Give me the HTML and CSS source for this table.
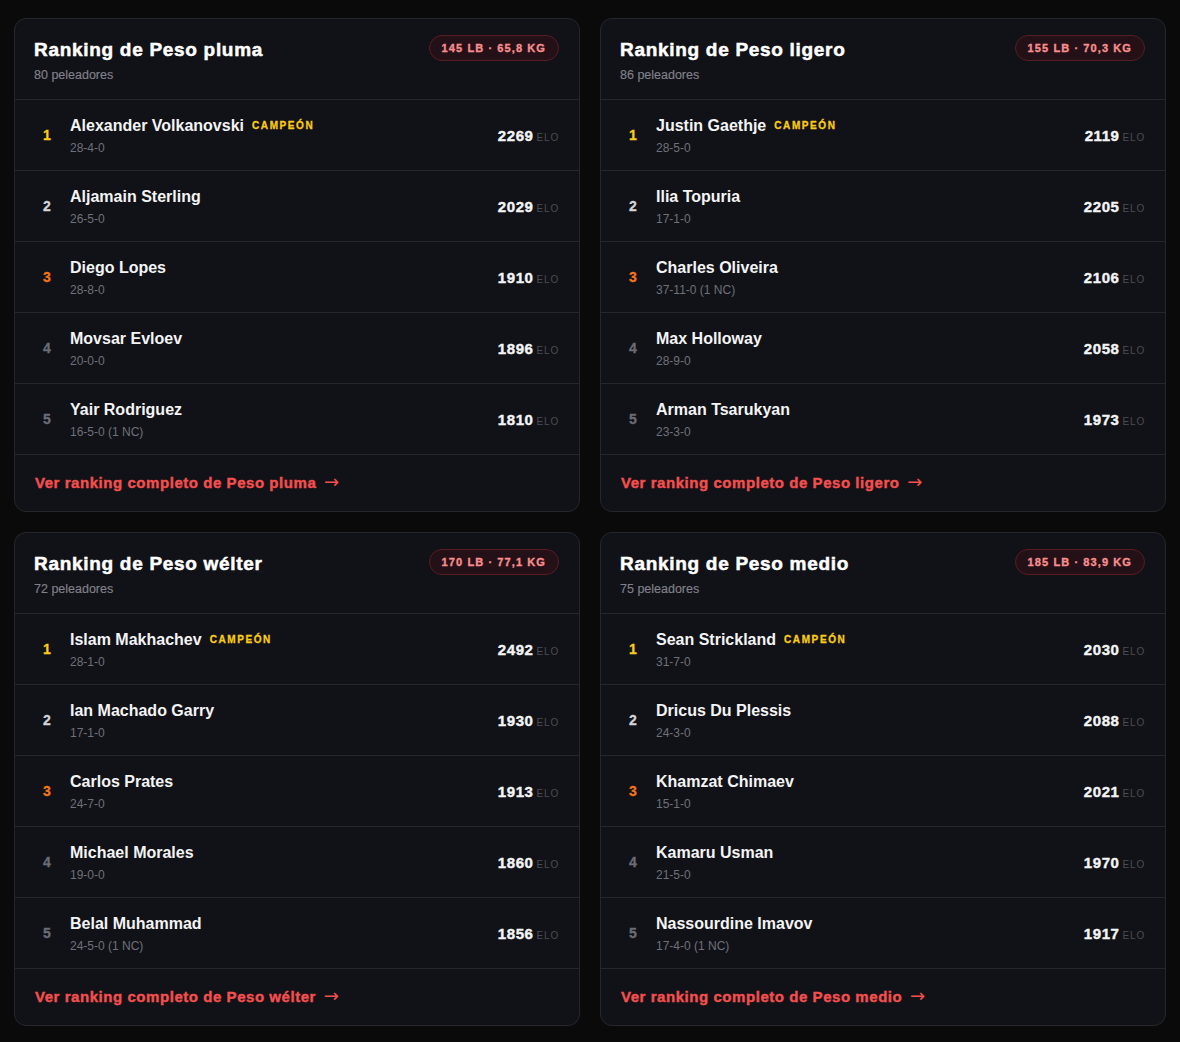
FILE: index.html
```html
<!DOCTYPE html>
<html lang="es">
<head>
<meta charset="utf-8">
<link rel="stylesheet" href="styles.css">
</head>
<body>
<div class="grid">

<section class="card">
  <header class="card-head">
    <div><h2>Ranking de Peso pluma</h2><p class="count">80 peleadores</p></div>
    <span class="badge">145 LB · 65,8 KG</span>
  </header>
  <ul class="rows">
    <li class="row"><span class="rank r1">1</span><div class="info"><div class="name">Alexander Volkanovski<span class="champ">CAMPEÓN</span></div><div class="rec">28-4-0</div></div><div class="elo">2269<span>ELO</span></div></li>
    <li class="row"><span class="rank r2">2</span><div class="info"><div class="name">Aljamain Sterling</div><div class="rec">26-5-0</div></div><div class="elo">2029<span>ELO</span></div></li>
    <li class="row"><span class="rank r3">3</span><div class="info"><div class="name">Diego Lopes</div><div class="rec">28-8-0</div></div><div class="elo">1910<span>ELO</span></div></li>
    <li class="row"><span class="rank">4</span><div class="info"><div class="name">Movsar Evloev</div><div class="rec">20-0-0</div></div><div class="elo">1896<span>ELO</span></div></li>
    <li class="row"><span class="rank">5</span><div class="info"><div class="name">Yair Rodriguez</div><div class="rec">16-5-0 (1 NC)</div></div><div class="elo">1810<span>ELO</span></div></li>
  </ul>
  <footer class="card-foot"><a href="#">Ver ranking completo de Peso pluma <span class="arrow">→</span></a></footer>
</section>

<section class="card">
  <header class="card-head">
    <div><h2>Ranking de Peso ligero</h2><p class="count">86 peleadores</p></div>
    <span class="badge">155 LB · 70,3 KG</span>
  </header>
  <ul class="rows">
    <li class="row"><span class="rank r1">1</span><div class="info"><div class="name">Justin Gaethje<span class="champ">CAMPEÓN</span></div><div class="rec">28-5-0</div></div><div class="elo">2119<span>ELO</span></div></li>
    <li class="row"><span class="rank r2">2</span><div class="info"><div class="name">Ilia Topuria</div><div class="rec">17-1-0</div></div><div class="elo">2205<span>ELO</span></div></li>
    <li class="row"><span class="rank r3">3</span><div class="info"><div class="name">Charles Oliveira</div><div class="rec">37-11-0 (1 NC)</div></div><div class="elo">2106<span>ELO</span></div></li>
    <li class="row"><span class="rank">4</span><div class="info"><div class="name">Max Holloway</div><div class="rec">28-9-0</div></div><div class="elo">2058<span>ELO</span></div></li>
    <li class="row"><span class="rank">5</span><div class="info"><div class="name">Arman Tsarukyan</div><div class="rec">23-3-0</div></div><div class="elo">1973<span>ELO</span></div></li>
  </ul>
  <footer class="card-foot"><a href="#">Ver ranking completo de Peso ligero <span class="arrow">→</span></a></footer>
</section>

<section class="card">
  <header class="card-head">
    <div><h2>Ranking de Peso wélter</h2><p class="count">72 peleadores</p></div>
    <span class="badge">170 LB · 77,1 KG</span>
  </header>
  <ul class="rows">
    <li class="row"><span class="rank r1">1</span><div class="info"><div class="name">Islam Makhachev<span class="champ">CAMPEÓN</span></div><div class="rec">28-1-0</div></div><div class="elo">2492<span>ELO</span></div></li>
    <li class="row"><span class="rank r2">2</span><div class="info"><div class="name">Ian Machado Garry</div><div class="rec">17-1-0</div></div><div class="elo">1930<span>ELO</span></div></li>
    <li class="row"><span class="rank r3">3</span><div class="info"><div class="name">Carlos Prates</div><div class="rec">24-7-0</div></div><div class="elo">1913<span>ELO</span></div></li>
    <li class="row"><span class="rank">4</span><div class="info"><div class="name">Michael Morales</div><div class="rec">19-0-0</div></div><div class="elo">1860<span>ELO</span></div></li>
    <li class="row"><span class="rank">5</span><div class="info"><div class="name">Belal Muhammad</div><div class="rec">24-5-0 (1 NC)</div></div><div class="elo">1856<span>ELO</span></div></li>
  </ul>
  <footer class="card-foot"><a href="#">Ver ranking completo de Peso wélter <span class="arrow">→</span></a></footer>
</section>

<section class="card">
  <header class="card-head">
    <div><h2>Ranking de Peso medio</h2><p class="count">75 peleadores</p></div>
    <span class="badge">185 LB · 83,9 KG</span>
  </header>
  <ul class="rows">
    <li class="row"><span class="rank r1">1</span><div class="info"><div class="name">Sean Strickland<span class="champ">CAMPEÓN</span></div><div class="rec">31-7-0</div></div><div class="elo">2030<span>ELO</span></div></li>
    <li class="row"><span class="rank r2">2</span><div class="info"><div class="name">Dricus Du Plessis</div><div class="rec">24-3-0</div></div><div class="elo">2088<span>ELO</span></div></li>
    <li class="row"><span class="rank r3">3</span><div class="info"><div class="name">Khamzat Chimaev</div><div class="rec">15-1-0</div></div><div class="elo">2021<span>ELO</span></div></li>
    <li class="row"><span class="rank">4</span><div class="info"><div class="name">Kamaru Usman</div><div class="rec">21-5-0</div></div><div class="elo">1970<span>ELO</span></div></li>
    <li class="row"><span class="rank">5</span><div class="info"><div class="name">Nassourdine Imavov</div><div class="rec">17-4-0 (1 NC)</div></div><div class="elo">1917<span>ELO</span></div></li>
  </ul>
  <footer class="card-foot"><a href="#">Ver ranking completo de Peso medio <span class="arrow">→</span></a></footer>
</section>

</div>
</body>
</html>
```

FILE: styles.css
```css
* { box-sizing: border-box; }
html, body { margin: 0; padding: 0; }
body {
  background: #0a0a0b;
  font-family: "Liberation Sans", Arial, sans-serif;
  color: #f4f4f5;
  padding: 18px 14px;
}
.grid {
  display: grid;
  grid-template-columns: 566px 566px;
  column-gap: 20px;
  row-gap: 20px;
}
.card {
  background: #111217;
  border: 1px solid #26272d;
  border-radius: 12px;
  overflow: hidden;
}
.card-head {
  display: flex;
  justify-content: space-between;
  align-items: flex-start;
  padding: 16px 20px 0 19px;
  height: 81px;
  border-bottom: 1px solid #26272d;
}
.card-head h2 {
  margin: 3px 0 0;
  font-size: 19px;
  font-weight: 900;
  line-height: 24px;
  color: #ffffff;
  letter-spacing: 0.7px;
  -webkit-text-stroke: 0.5px currentColor;
}
.count {
  margin: 6px 0 0;
  font-size: 12.5px;
  line-height: 14px;
  color: #80818a;
  -webkit-text-stroke: 0.15px currentColor;
}
.badge {
  height: 26px;
  line-height: 24px;
  padding: 0 12px;
  border: 1px solid #5a1d24;
  background: #241118;
  border-radius: 13px;
  color: #f98d8d;
  font-size: 11px;
  font-weight: 900;
  letter-spacing: 1.1px;
  -webkit-text-stroke: 0.35px currentColor;
}
.rows { list-style: none; margin: 0; padding: 0; }
.row {
  display: flex;
  align-items: center;
  height: 71px;
  padding: 0 20px 0 19px;
  border-bottom: 1px solid #26272d;
}
.rank {
  width: 26px;
  text-align: center;
  font-size: 14px;
  font-weight: 900;
  color: #6b6c75;
  margin-right: 10px;
  -webkit-text-stroke: 0.3px currentColor;
}
.rank.r1 { color: #facc15; }
.rank.r2 { color: #d4d4d8; }
.rank.r3 { color: #f97316; }
.info { flex: 1; }
.name {
  font-size: 16px;
  font-weight: 700;
  line-height: 20px;
  color: #f4f4f5;
  display: flex;
  align-items: center;
}
.champ {
  margin-left: 8px;
  font-size: 10px;
  font-weight: 900;
  letter-spacing: 1.6px;
  color: #facc15;
  -webkit-text-stroke: 0.3px currentColor;
}
.rec {
  margin-top: 5px;
  font-size: 12px;
  line-height: 14px;
  color: #6f7079;
}
.elo {
  font-size: 15px;
  font-weight: 900;
  color: #f4f4f5;
  letter-spacing: 0.6px;
  -webkit-text-stroke: 0.4px currentColor;
}
.elo span {
  margin-left: 3px;
  font-size: 10px;
  font-weight: 400;
  letter-spacing: 0.8px;
  color: #4b4c55;
  -webkit-text-stroke: 0;
}
.card-foot {
  height: 56px;
  display: flex;
  align-items: center;
  padding: 0 20px;
}
.card-foot a {
  color: #f44f4f;
  font-size: 15px;
  line-height: 18px;
  font-weight: 900;
  letter-spacing: 0.55px;
  text-decoration: none;
  -webkit-text-stroke: 0.4px currentColor;
  padding-bottom: 1px;
}
.arrow {
  margin-left: 3px;
  font-family: "DejaVu Sans", sans-serif;
  font-size: 18px;
  line-height: 0;
  font-weight: 400;
  letter-spacing: 0;
  -webkit-text-stroke: 0;
}
```
